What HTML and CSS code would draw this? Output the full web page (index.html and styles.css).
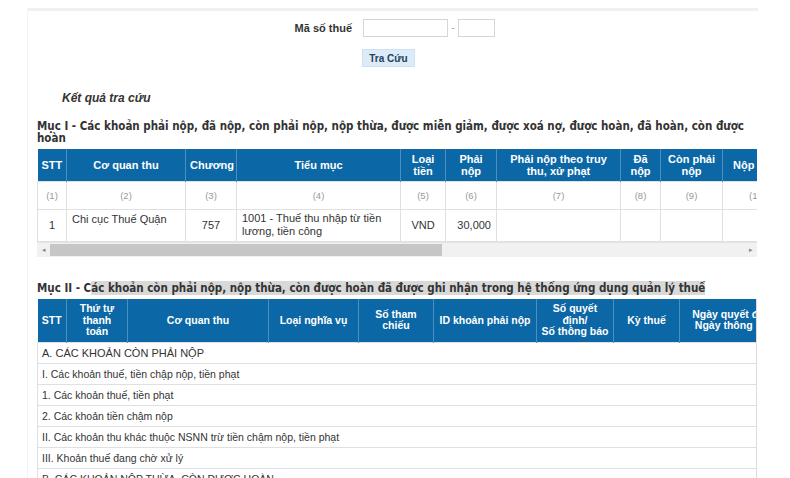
FILE: index.html
```html
<!DOCTYPE html>
<html lang="vi">
<head>
    <meta charset="UTF-8">
    <meta name="viewport" content="width=device-width, initial-scale=1.0">
    <title>Tra cứu nghĩa vụ thuế</title>
    <link rel="stylesheet" href="styles.css">
</head>
<body>
    <div class="panel">
        <form class="search" id="searchForm">
            <label for="mst" class="search-label">Mã số thuế</label>
            <div class="search-field">
                <input type="text" id="mst" class="mst" name="mst">
                <span class="dash">-</span>
                <input type="text" id="mstSub" class="mst-sub" name="mstSub">
            </div>
            <div></div>
            <div class="search-field">
                <button type="button" class="btn">Tra Cứu</button>
            </div>
        </form>

        <p class="result-title">Kết quả tra cứu</p>

        <h3 class="sec-title">Mục I - Các khoản phải nộp, đã nộp, còn phải nộp, nộp thừa, được miễn giảm, được xoá nợ, được hoàn, đã hoàn, còn được hoàn</h3>
        <div class="table-wrap">
            <table class="grid grid-1">
                <colgroup>
                    <col><col><col><col><col><col><col><col><col><col><col><col><col><col><col>
                </colgroup>
                <thead>
                    <tr>
                        <th>STT</th>
                        <th>Cơ quan thu</th>
                        <th>Chương</th>
                        <th>Tiểu mục</th>
                        <th>Loại tiền</th>
                        <th>Phải nộp</th>
                        <th>Phải nộp theo truy thu, xử phạt</th>
                        <th>Đã nộp</th>
                        <th>Còn phải nộp</th>
                        <th>Nộp thừa</th>
                        <th>Được miễn giảm</th>
                        <th>Được xoá nợ</th>
                        <th>Được hoàn</th>
                        <th>Đã hoàn</th>
                        <th>Còn được hoàn</th>
                    </tr>
                </thead>
                <tbody>
                    <tr class="idx">
                        <td>(1)</td><td>(2)</td><td>(3)</td><td>(4)</td><td>(5)</td>
                        <td>(6)</td><td>(7)</td><td>(8)</td><td>(9)</td><td>(10)</td>
                        <td>(11)</td><td>(12)</td><td>(13)</td><td>(14)</td><td>(15)</td>
                    </tr>
                    <tr class="data">
                        <td class="center">1</td>
                        <td class="left top">Chi cục Thuế Quận</td>
                        <td class="center">757</td>
                        <td class="left">1001 - Thuế thu nhập từ tiền lương, tiền công</td>
                        <td class="center">VND</td>
                        <td class="right">30,000</td>
                        <td></td><td></td><td></td><td></td>
                        <td></td><td></td><td></td><td></td><td></td>
                    </tr>
                </tbody>
            </table>
        </div>
        <div class="scrollbar">
            <span class="arrow">&#9666;</span>
            <div class="track"><div class="thumb"></div></div>
            <span class="arrow">&#9656;</span>
        </div>

        <h3 class="sec-title sec-2">Mục II - C<span class="hl">ác khoản còn phải nộp, nộp thừa, còn được hoàn đã được ghi nhận trong hệ thống ứng dụng quản lý thuế</span></h3>
        <div class="table-wrap wrap-2">
            <table class="grid grid-2">
                <colgroup>
                    <col><col><col><col><col><col><col><col><col><col><col>
                </colgroup>
                <thead>
                    <tr>
                        <th>STT</th>
                        <th class="narrow">Thứ tự thanh toán</th>
                        <th>Cơ quan thu</th>
                        <th>Loại nghĩa vụ</th>
                        <th class="mid">Số tham chiếu</th>
                        <th>ID khoản phải nộp</th>
                        <th class="tight">Số quyết<br>định/<br>Số thông báo</th>
                        <th>Kỳ thuế</th>
                        <th>Ngày quyết định/<br>Ngày thông báo</th>
                        <th>Hạn nộp</th>
                        <th>Số tiền</th>
                    </tr>
                </thead>
                <tbody>
                    <tr class="group"><td colspan="11">A. CÁC KHOẢN CÒN PHẢI NỘP</td></tr>
                    <tr class="group"><td colspan="11">I. Các khoản thuế, tiền chập nộp, tiền phạt</td></tr>
                    <tr class="group"><td colspan="11">1. Các khoản thuế, tiền phạt</td></tr>
                    <tr class="group"><td colspan="11">2. Các khoản tiền chậm nộp</td></tr>
                    <tr class="group"><td colspan="11">II. Các khoản thu khác thuộc NSNN trừ tiền chậm nộp, tiền phạt</td></tr>
                    <tr class="group"><td colspan="11">III. Khoản thuế đang chờ xử lý</td></tr>
                    <tr class="group"><td colspan="11">B. CÁC KHOẢN NỘP THỪA, CÒN ĐƯỢC HOÀN</td></tr>
                </tbody>
            </table>
        </div>
    </div>
</body>
</html>
```

FILE: styles.css
```css
body {
    margin: 0;
    background: #fff;
    font-family: "Liberation Sans", Arial, sans-serif;
    color: #333;
    height: 478px;
    overflow: hidden;
}
.panel {
    margin: 8px 0 0 27px;
    width: 721px;
    padding: 0 0 0 9px;
    border-top: 3px solid #f0f0ee;
    border-left: 1px solid #eef5fa;
}

/* search form */
.search {
    display: grid;
    grid-template-columns: 315px auto;
    column-gap: 11px;
    row-gap: 12px;
    padding-top: 8px;
}
.search-label {
    text-align: right;
    font-size: 11px;
    font-weight: bold;
    line-height: 18px;
}
.search-field {
    display: flex;
    align-items: center;
}
.mst,
.mst-sub {
    box-sizing: border-box;
    height: 18px;
    width: 85px;
    border: 1px solid #d6d6d6;
    padding: 0 3px;
    margin: 0;
}
.mst-sub {
    width: 37px;
}
.dash {
    width: 10px;
    text-align: center;
    font-size: 9px;
    color: #888;
}
.btn {
    margin-left: -1px;
    height: 18px;
    width: 53px;
    padding: 0;
    border: 1px solid #cfe2f3;
    background: #dcebf8;
    color: #24405c;
    font-family: inherit;
    font-size: 10px;
    font-weight: bold;
}

.result-title {
    margin: 24px 0 0 25px;
    font-size: 12px;
    line-height: 14px;
    font-style: italic;
    font-weight: bold;
    color: #333;
}

.sec-title {
    margin: 15px 0 5px;
    font-family: "DejaVu Sans Condensed", "DejaVu Sans", sans-serif;
    font-size: 11.5px;
    line-height: 12px;
    font-weight: bold;
    color: #333;
}
.sec-2 {
    margin-top: 25px;
    margin-bottom: 4px;
    line-height: 13px;
}
.hl {
    background: #d9d9d9;
}

/* tables */
.table-wrap {
    width: 720px;
    overflow: hidden;
}
.wrap-2 {
    box-sizing: border-box;
    border-right: 1px solid #dcdcdc;
}
.grid {
    border-collapse: collapse;
    table-layout: fixed;
    font-size: 11px;
}
.grid th {
    background: #0b67a5;
    color: #fff;
    font-weight: bold;
    line-height: 12px;
    padding: 3px 4px;
    border: 1px solid #4d8ec0;
    border-top: none;
    border-bottom: none;
    text-align: center;
    vertical-align: middle;
}
.grid th:first-child {
    border-left: none;
}
.grid td {
    border: 1px solid #e0e0e0;
    padding: 0 5px;
    line-height: 13px;
    vertical-align: middle;
}
.grid-1 {
    width: 1105px;
}
.grid-1 col:nth-child(1) { width: 29px; }
.grid-1 col:nth-child(2) { width: 119px; }
.grid-1 col:nth-child(3) { width: 51px; }
.grid-1 col:nth-child(4) { width: 164px; }
.grid-1 col:nth-child(5) { width: 45px; }
.grid-1 col:nth-child(6) { width: 51px; }
.grid-1 col:nth-child(7) { width: 124px; }
.grid-1 col:nth-child(8) { width: 40px; }
.grid-1 col:nth-child(9) { width: 62px; }
.grid-1 col:nth-child(n+10) { width: 70px; }
.grid-1 thead tr {
    height: 32px;
}
.grid-1 .idx {
    height: 28px;
}
.grid-1 .idx td {
    text-align: center;
    font-size: 9.5px;
    color: #999;
}
.grid-1 .data {
    height: 32px;
}
.center { text-align: center; }
.right { text-align: right; }
.left { text-align: left; }
.grid td.top {
    vertical-align: top;
    padding-top: 3px;
}

.scrollbar {
    width: 720px;
    height: 15px;
    display: flex;
    align-items: center;
    background: #f1f1f1;
    border-top: 1px solid #e4e4e4;
    box-sizing: border-box;
}
.arrow {
    width: 13px;
    text-align: center;
    font-size: 7px;
    color: #888;
}
.track {
    flex: 1;
    height: 12px;
}
.thumb {
    width: 392px;
    height: 12px;
    background: #c6c6c6;
}

.grid-2 {
    width: 912px;
}
.grid-2 col:nth-child(1) { width: 29px; }
.grid-2 col:nth-child(2) { width: 61px; }
.grid-2 col:nth-child(3) { width: 141px; }
.grid-2 col:nth-child(4) { width: 90px; }
.grid-2 col:nth-child(5) { width: 75px; }
.grid-2 col:nth-child(6) { width: 103px; }
.grid-2 col:nth-child(7) { width: 77px; }
.grid-2 col:nth-child(8) { width: 66px; }
.grid-2 col:nth-child(9) { width: 110px; }
.grid-2 col:nth-child(10) { width: 70px; }
.grid-2 col:nth-child(11) { width: 90px; }
.grid-2 thead tr {
    height: 44px;
}
.grid-2 th {
    font-size: 10.5px;
    line-height: 11.5px;
    padding: 2px 2px;
}
.grid-2 th.narrow {
    padding: 2px 9px;
}
.grid-2 th.mid {
    padding: 2px 5px;
}
.grid-2 th.tight {
    padding: 2px 0;
}
.grid-2 .group {
    height: 21px;
}
.grid-2 .group td {
    padding: 0 4px;
    font-size: 10.5px;
}
.grid-2 .group:first-child td {
    font-size: 11px;
}
```
